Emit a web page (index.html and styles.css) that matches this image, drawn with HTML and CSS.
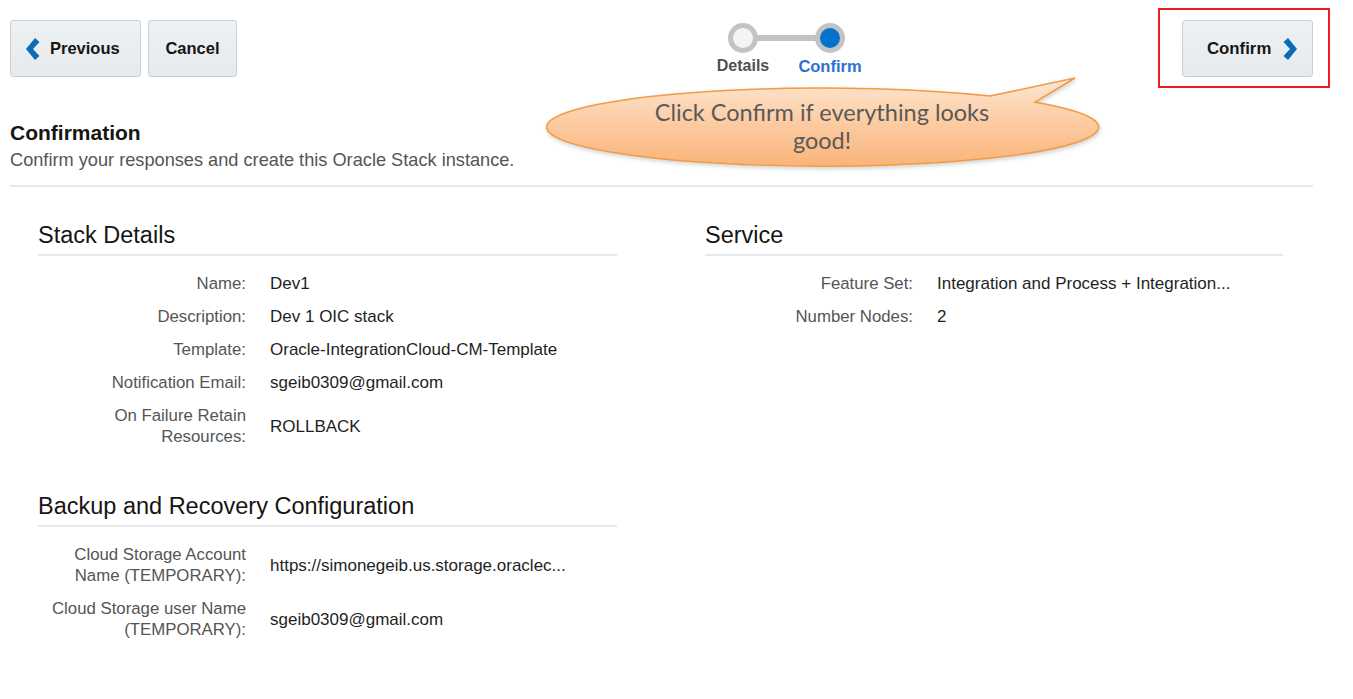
FILE: index.html
```html
<!DOCTYPE html>
<html lang="en">
<head>
<meta charset="utf-8">
<title>Confirmation</title>
<link rel="stylesheet" href="styles.css">
</head>
<body>
<div class="page">
  <header class="header">
    <div class="btn-group">
      <button class="btn btn-prev">
        <svg class="chev" viewBox="0 0 15 24" width="15" height="24"><path d="M10 1 L14.5 5 L8 12 L14.5 19 L10 23 L1 12 Z" fill="#0b6bb5"/></svg>
        <span>Previous</span>
      </button>
      <button class="btn btn-cancel">Cancel</button>
    </div>
    <div class="stepper">
      <div class="step">
        <span class="dot"></span>
        <span class="step-label">Details</span>
      </div>
      <div class="step step-active">
        <span class="dot"></span>
        <span class="step-label">Confirm</span>
      </div>
    </div>
    <div class="confirm-wrap">
      <button class="btn btn-confirm">
        <span>Confirm</span>
        <svg class="chev" viewBox="0 0 15 24" width="15" height="24"><path d="M5 1 L0.5 5 L7 12 L0.5 19 L5 23 L14 12 Z" fill="#0b6bb5"/></svg>
      </button>
    </div>
  </header>

  <div class="callout">
    <svg class="callout-shape" viewBox="0 0 565 100" width="565" height="100">
      <defs>
        <linearGradient id="cg" x1="0" y1="0" x2="0" y2="1">
          <stop offset="0" stop-color="#fde6d2"/>
          <stop offset="0.5" stop-color="#fccca2"/>
          <stop offset="1" stop-color="#f9b47a"/>
        </linearGradient>
      </defs>
      <path d="M450 24.1 L535 6 L495 30.2 A276 39 0 1 1 450 24.1 Z" fill="url(#cg)" stroke="#f29b45" stroke-width="1.5"/>
    </svg>
    <div class="callout-text">Click Confirm if everything looks<br>good!</div>
  </div>

  <section class="intro">
    <h1 class="title">Confirmation</h1>
    <p class="subtitle">Confirm your responses and create this Oracle Stack instance.</p>
  </section>

  <div class="columns">
    <div class="col">
      <section class="panel">
        <h2 class="panel-title">Stack Details</h2>
        <div class="fields">
          <div class="row"><div class="label">Name:</div><div class="value">Dev1</div></div>
          <div class="row"><div class="label">Description:</div><div class="value">Dev 1 OIC stack</div></div>
          <div class="row"><div class="label">Template:</div><div class="value">Oracle-IntegrationCloud-CM-Template</div></div>
          <div class="row"><div class="label">Notification Email:</div><div class="value">sgeib0309@gmail.com</div></div>
          <div class="row"><div class="label">On Failure Retain<br>Resources:</div><div class="value">ROLLBACK</div></div>
        </div>
      </section>
      <section class="panel panel-gap">
        <h2 class="panel-title">Backup and Recovery Configuration</h2>
        <div class="fields">
          <div class="row"><div class="label">Cloud Storage Account<br>Name (TEMPORARY):</div><div class="value">https://simonegeib.us.storage.oraclec...</div></div>
          <div class="row"><div class="label">Cloud Storage user Name<br>(TEMPORARY):</div><div class="value">sgeib0309@gmail.com</div></div>
        </div>
      </section>
    </div>
    <div class="col">
      <section class="panel">
        <h2 class="panel-title">Service</h2>
        <div class="fields">
          <div class="row"><div class="label">Feature Set:</div><div class="value">Integration and Process + Integration...</div></div>
          <div class="row"><div class="label">Number Nodes:</div><div class="value">2</div></div>
        </div>
      </section>
    </div>
  </div>
</div>
</body>
</html>
```

FILE: styles.css
```css
* { box-sizing: border-box; }
html, body { margin: 0; padding: 0; background: #ffffff; }
body {
  font-family: "Liberation Sans", Arial, sans-serif;
  color: #1f1f1f;
}
.page {
  position: relative;
  padding: 20px 40px 0 10px;
  width: 1353px;
  height: 699px;
  overflow: hidden;
}

/* Header */
.header {
  display: flex;
  align-items: flex-start;
  height: 57px;
}
.btn-group { display: flex; gap: 7px; }
.btn {
  display: flex;
  align-items: center;
  justify-content: center;
  height: 57px;
  padding: 0;
  border: 1px solid #c8d1d8;
  border-radius: 3px;
  background: linear-gradient(#eef1f3, #e6eaed);
  font-family: "Liberation Sans", Arial, sans-serif;
  font-size: 16.5px;
  font-weight: bold;
  color: #161513;
}
.btn-prev { width: 131px; gap: 10px; justify-content: flex-start; padding-left: 14px; }
.btn-cancel { width: 89px; }
.btn-confirm { width: 131px; gap: 12px; justify-content: flex-start; padding-left: 24px; font-size: 16.8px; }
.chev { display: block; }

.stepper {
  display: flex;
  gap: 27px;
  margin-left: 476px;
  margin-top: 3px;
  position: relative;
}
.stepper::before {
  content: "";
  position: absolute;
  left: 30px;
  top: 12px;
  width: 87px;
  height: 6px;
  background: #c3c3c3;
}
.step {
  width: 60px;
  display: flex;
  flex-direction: column;
  align-items: center;
  position: relative;
}
.dot {
  display: block;
  width: 30px;
  height: 30px;
  border: 5px solid #c3c3c3;
  border-radius: 50%;
  background: #f2f4f6;
}
.step-active .dot { background: #0572ce; }
.step-label {
  margin-top: 3px;
  line-height: 20px;
  font-size: 16px;
  font-weight: bold;
  color: #505050;
  white-space: nowrap;
}
.step-active .step-label { color: #2f6fd6; font-size: 16.5px; }

.confirm-wrap {
  margin-left: auto;
  position: relative;
}
.confirm-wrap::after {
  content: "";
  position: absolute;
  top: -12px;
  left: -24px;
  right: -17px;
  bottom: -11px;
  border: 2px solid #ec1c24;
  pointer-events: none;
}

/* Callout */
.callout {
  position: absolute;
  left: 540px;
  top: 72px;
  width: 565px;
  height: 100px;
  z-index: 2;
}
.callout-shape {
  position: absolute;
  left: 0;
  top: 0;
  filter: drop-shadow(1px 2px 2px rgba(0,0,0,0.18));
}
.callout-text {
  position: absolute;
  left: 62px;
  top: 26px;
  width: 440px;
  text-align: center;
  font-family: Lato, "Open Sans", sans-serif;
  font-size: 23.5px;
  line-height: 28px;
  color: #595959;
}

/* Intro */
.intro {
  margin-top: 43px;
  padding-bottom: 14px;
  border-bottom: 2px solid #e6e9ed;
}
.title {
  margin: 0;
  font-size: 21px;
  line-height: 26px;
  font-weight: bold;
  color: #161513;
}
.subtitle {
  margin: 3px 0 0;
  font-size: 18.2px;
  line-height: 22px;
  color: #555555;
}

/* Columns */
.columns {
  display: grid;
  grid-template-columns: 579px 578px;
  column-gap: 88px;
  padding-left: 28px;
  margin-top: 34px;
}
.panel-gap { margin-top: 39px; }
.panel-title {
  margin: 0;
  font-size: 23.5px;
  line-height: 28px;
  font-weight: normal;
  color: #161513;
  padding-bottom: 5px;
  border-bottom: 2px solid #e6e9ed;
}
.fields { padding-top: 11px; }
.row {
  display: grid;
  grid-template-columns: 208px 1fr;
  column-gap: 24px;
  align-items: center;
  padding: 6px 0;
  font-size: 17px;
  line-height: 21px;
}
.label {
  text-align: right;
  color: #555555;
  font-size: 16.8px;
}
.value {
  color: #1f1f1f;
  white-space: nowrap;
}
```
